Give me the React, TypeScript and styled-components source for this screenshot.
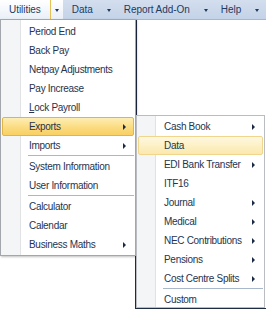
import React from "react";
import styled, { createGlobalStyle, css } from "styled-components";

type Entry = { label: React.ReactNode; sub?: boolean; state?: "open" | "hover" } | "-";

const barItems = [
  { label: "Utilities", active: true },
  { label: "Data" },
  { label: "Report Add-On" },
  { label: "Help" },
];

const mainItems: Entry[] = [
  { label: "Period End" },
  { label: "Back Pay" },
  { label: "Netpay Adjustments" },
  { label: "Pay Increase" },
  { label: (<><u>L</u>ock Payroll</>) },
  { label: "Exports", sub: true, state: "open" },
  { label: "Imports", sub: true },
  "-",
  { label: "System Information" },
  { label: "User Information" },
  "-",
  { label: "Calculator" },
  { label: "Calendar" },
  { label: "Business Maths", sub: true },
];

const exportItems: Entry[] = [
  { label: "Cash Book", sub: true },
  { label: "Data", state: "hover" },
  { label: "EDI Bank Transfer", sub: true },
  { label: "ITF16" },
  { label: "Journal", sub: true },
  { label: "Medical", sub: true },
  { label: "NEC Contributions", sub: true },
  { label: "Pensions", sub: true },
  { label: "Cost Centre Splits", sub: true },
  "-",
  { label: "Custom" },
];

const MenuList = ({ items, gutter }: { items: Entry[]; gutter: number }) => (
  <>
    {items.map((it, i) =>
      it === "-" ? (
        <Separator key={i} $indent={gutter + 8} />
      ) : (
        <Item key={i} $state={it.state} $pad={gutter + 7}>
          <ItemLabel>{it.label}</ItemLabel>
          {it.sub && <RightArrow />}
        </Item>
      )
    )}
  </>
);

export default function App() {
  return (
    <Screen>
      <GlobalStyle />
      <MenuBar>
        {barItems.map((b) => (
          <SplitButton key={b.label} $active={b.active}>
            <BarLabel $active={b.active}>{b.label}</BarLabel>
            <BarDrop>
              <DownArrow />
            </BarDrop>
          </SplitButton>
        ))}
      </MenuBar>
      <Workspace>
        <Spacer />
        <WindowFrame />
      </Workspace>

      <MainMenu $gutter={19}>
        <MenuList items={mainItems} gutter={19} />
      </MainMenu>
      <SubMenu $gutter={18}>
        <MenuList items={exportItems} gutter={18} />
      </SubMenu>
    </Screen>
  );
}

const GlobalStyle = createGlobalStyle`
  html, body {
    margin: 0;
    padding: 0;
    background: #ffffff;
  }
  body {
    font-family: "Liberation Sans", Arial, sans-serif;
  }
`;

const Screen = styled.div`
  position: relative;
  width: 266px;
  height: 310px;
  overflow: hidden;
  background: #fff;
  font-size: 10px;
  letter-spacing: -0.3px;
`;

const MenuBar = styled.div`
  display: flex;
  height: 19px;
  background: linear-gradient(#d3deee, #c4d3e8);
  border-bottom: 1px solid #a6b6cd;
  letter-spacing: -0.05px;
`;

const SplitButton = styled.div<{ $active?: boolean }>`
  display: flex;
  align-items: stretch;
  ${(p) =>
    p.$active &&
    css`
      background: linear-gradient(#ffffff, #eaf0f8);
    `}
`;

const BarLabel = styled.div<{ $active?: boolean }>`
  display: flex;
  align-items: center;
  padding: 0 9px;
  color: #1e3a5f;
  border-right: 1px solid ${(p) => (p.$active ? "#e6bf55" : "transparent")};
`;

const BarDrop = styled.div`
  display: flex;
  align-items: center;
  justify-content: center;
  width: 12px;
`;

const DownArrow = styled.span`
  width: 0;
  height: 0;
  border-left: 2.5px solid transparent;
  border-right: 2.5px solid transparent;
  border-top: 3px solid #1e3a5f;
  margin-top: 1px;
`;

const Workspace = styled.div`
  display: flex;
  height: 289px;
`;

const Spacer = styled.div`
  width: 135px;
`;

const WindowFrame = styled.div`
  flex: 1;
  border-left: 2px solid #1d2b45;
  border-bottom: 1px solid #1d2b45;
  background: #fff;
`;

const Menu = styled.div<{ $gutter: number }>`
  position: absolute;
  box-sizing: border-box;
  border: 1px solid #a3a7ad;
  color: #25344f;
  background: linear-gradient(
    to right,
    #f4f5f6 0,
    #f4f5f6 ${(p) => p.$gutter}px,
    #e0e2e4 ${(p) => p.$gutter}px,
    #e0e2e4 ${(p) => p.$gutter + 1}px,
    #ffffff ${(p) => p.$gutter + 1}px
  );
`;

const MainMenu = styled(Menu)`
  left: 0;
  top: 19px;
  width: 136px;
  padding: 2px 0 1px;
  box-shadow: 1px 1px 2px rgba(0, 0, 0, 0.25);
`;

const SubMenu = styled(Menu)`
  left: 136px;
  top: 115px;
  width: 129px;
  height: 193px;
  padding-top: 1px;
  overflow: hidden;
  border-color: #b9bcc1;
`;

const stateStyles = {
  open: css`
    background: linear-gradient(#fdeeb5, #fbdd85 50%, #f8d062);
    border-color: #deb54a;
  `,
  hover: css`
    background: linear-gradient(#fef8e2, #fcefc0 60%, #fbe8ad);
    border-color: #efd68c;
  `,
};

const Item = styled.div<{ $state?: "open" | "hover"; $pad: number }>`
  display: flex;
  align-items: center;
  height: 19px;
  box-sizing: border-box;
  margin: 0 1px;
  padding-left: ${(p) => p.$pad}px;
  padding-right: 7px;
  border: 1px solid transparent;
  border-radius: 2px;
  white-space: nowrap;
  ${(p) => p.$state && stateStyles[p.$state]}
`;

const ItemLabel = styled.span`
  flex: 1;
  u {
    text-decoration-thickness: 1px;
    text-underline-offset: 1px;
  }
`;

const RightArrow = styled.span`
  width: 0;
  height: 0;
  border-top: 3px solid transparent;
  border-bottom: 3px solid transparent;
  border-left: 3px solid #1b2a44;
`;

const Separator = styled.div<{ $indent: number }>`
  margin: 0 1px 1px ${(p) => p.$indent}px;
  border-top: 1px solid #a9b7ca;
  height: 0;
`;
